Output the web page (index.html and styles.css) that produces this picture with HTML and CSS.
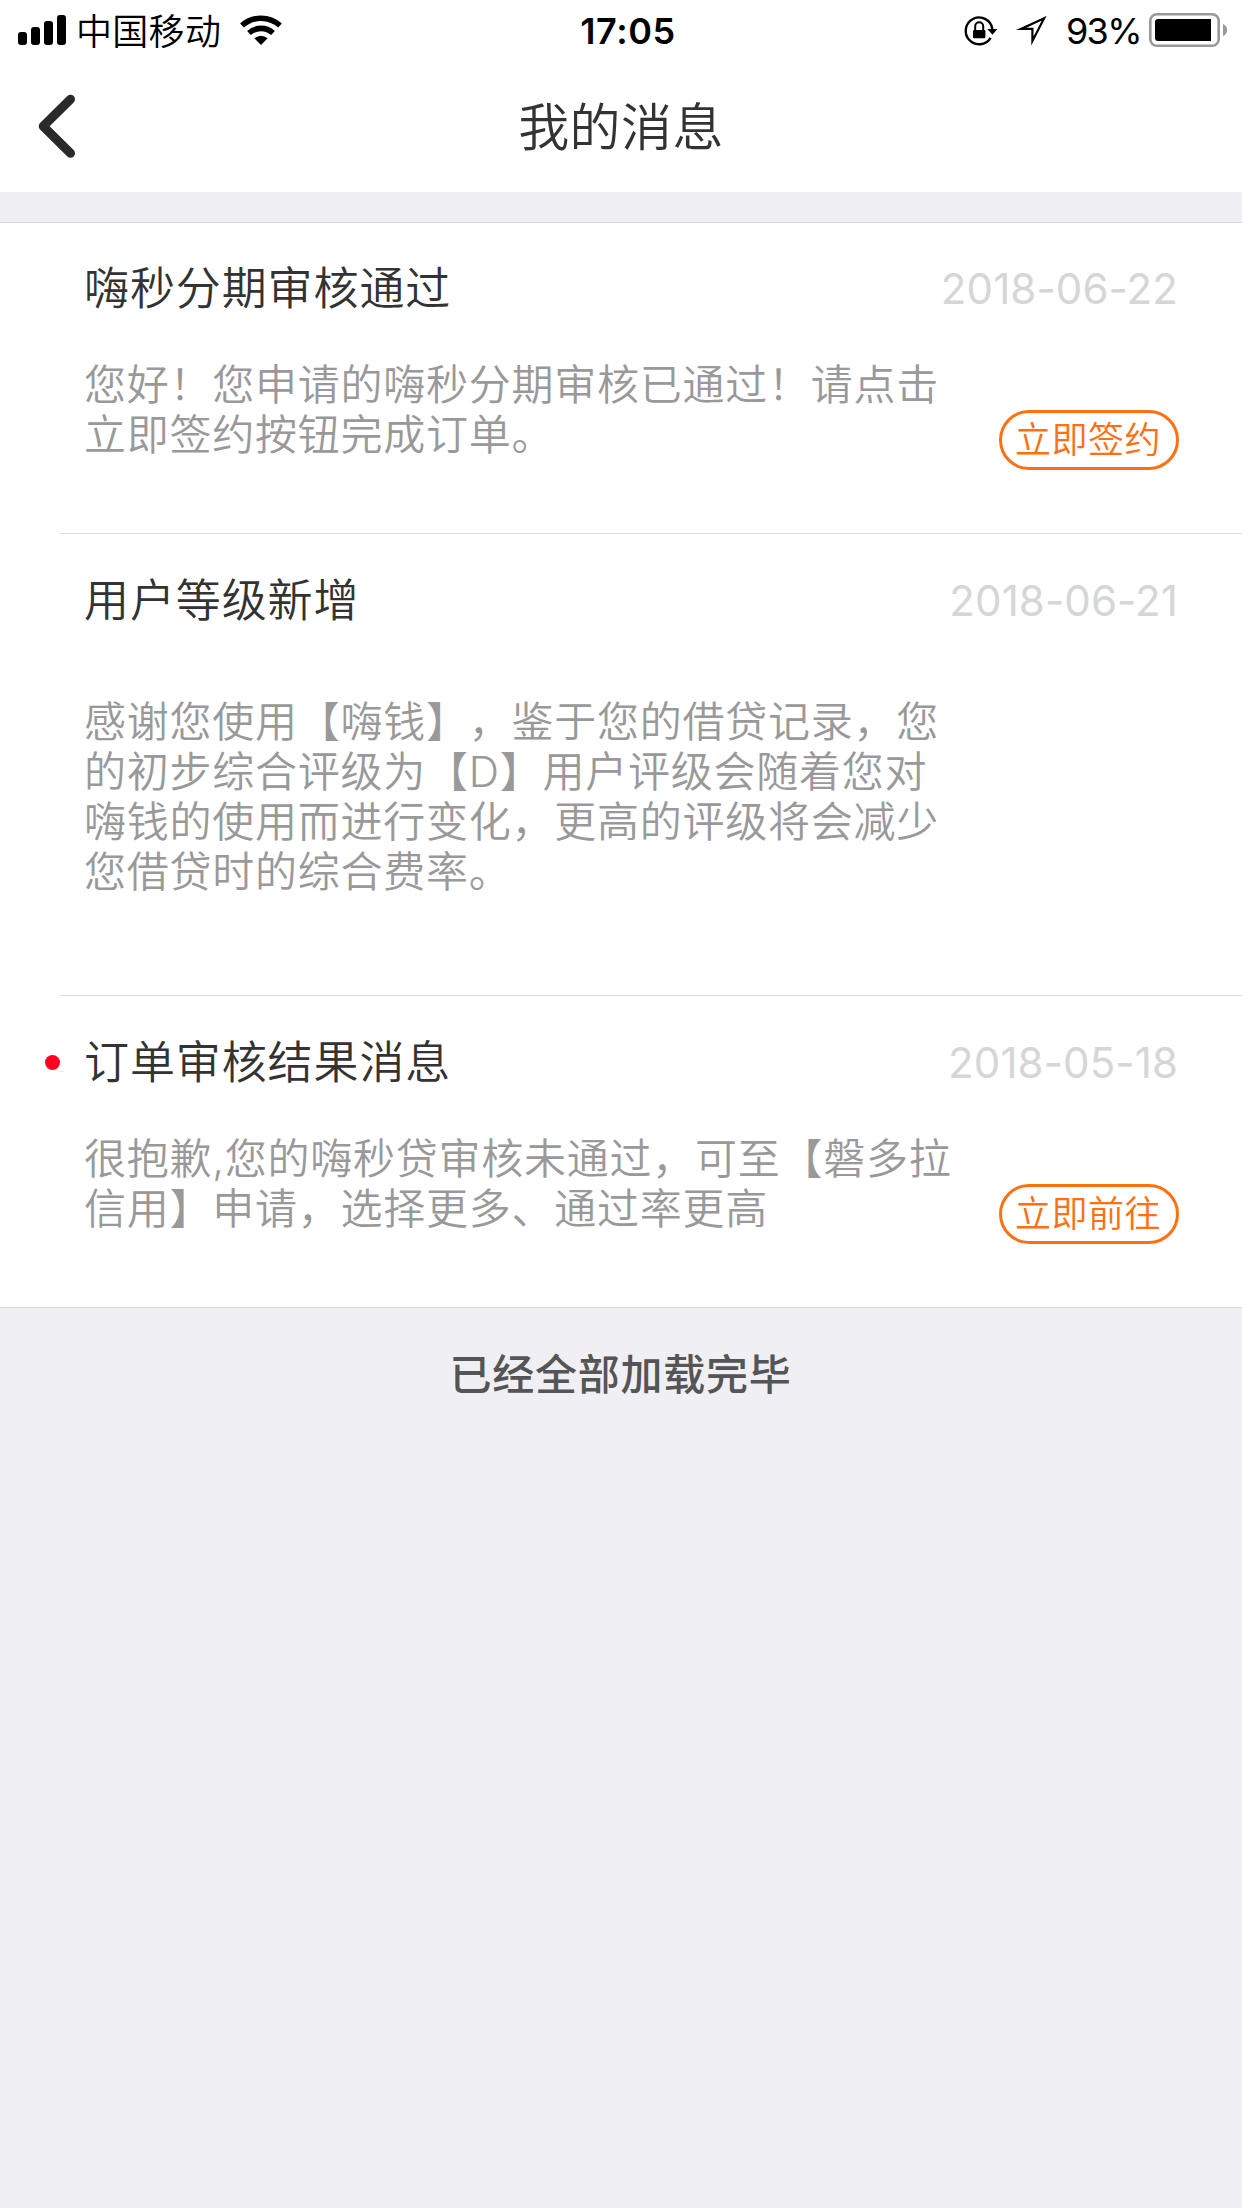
FILE: index.html
```
<!DOCTYPE html>
<html lang="zh-CN">
<head>
    <meta charset="UTF-8">
    <meta name="viewport" content="width=device-width, initial-scale=1.0">
    <title>我的消息</title>
    <link rel="stylesheet" href="styles.css">
</head>
<body>
    <header class="header">
        <div class="status-bar">
            <div class="status-left">
                <svg class="signal" width="48" height="60" viewBox="0 0 48 60">
                    <rect x="0" y="32" width="9" height="13" rx="3"/>
                    <rect x="13" y="27" width="9" height="18" rx="3"/>
                    <rect x="26" y="21" width="9" height="24" rx="3"/>
                    <rect x="39" y="15" width="9" height="30" rx="3"/>
                </svg>
                <span class="carrier">中国移动</span>
                <svg class="wifi" width="42" height="60" viewBox="0 0 42 60">
                    <path d="M2 25.5 A28.5 28.5 0 0 1 40 25.5" fill="none" stroke="#000" stroke-width="5.6"/>
                    <path d="M9 33 A18 18 0 0 1 33 33" fill="none" stroke="#000" stroke-width="5.6"/>
                    <path d="M14.3 38.3 Q21 33 27.7 38.3 L21 45 Z"/>
                </svg>
            </div>
            <span class="time">17:05</span>
            <div class="status-right">
                <svg class="lock" width="36" height="60" viewBox="0 0 36 60">
                    <path d="M27.6 37.8 A13.4 13.4 0 1 1 29.4 29" fill="none" stroke="#000" stroke-width="2.4"/>
                    <path d="M24.4 29 H34.4 L29.4 34.8 Z"/>
                    <rect x="10" y="30" width="12.4" height="8.2" rx="1.2"/>
                    <path d="M12.2 31 V26.2 A4 4 0 0 1 20.2 26.2 V31" fill="none" stroke="#000" stroke-width="2"/>
                </svg>
                <svg class="location" width="32" height="60" viewBox="0 0 32 60">
                    <path d="M28.2 18.2 L5 28.9 H16.4 V41 Z" fill="none" stroke="#000" stroke-width="2.2" stroke-miterlimit="8"/>
                </svg>
                <span class="percent">93%</span>
                <svg class="battery" width="79" height="60" viewBox="0 0 79 60">
                    <rect x="1.3" y="14.3" width="68.4" height="31.4" rx="6.5" fill="none" stroke="#999" stroke-width="2.6"/>
                    <path d="M9 19 H62 V41 H9 Q6 41 6 38 V22 Q6 19 9 19 Z"/>
                    <path d="M74 24 Q78 25.5 78 30 Q78 34.5 74 36 Z" fill="#999"/>
                </svg>
            </div>
        </div>
        <div class="nav">
            <svg class="back" width="40" height="66" viewBox="0 0 40 66">
                <path d="M34.5 6.2 L7.2 33.3 L34.5 60.3" fill="none" stroke="#2a2a2a" stroke-width="9" stroke-linecap="round" stroke-linejoin="round"/>
            </svg>
            <h1 class="nav-title">我的消息</h1>
        </div>
    </header>

    <main class="message-list">
        <div class="message">
            <div class="message-head">
                <h2 class="message-title">嗨秒分期审核通过</h2>
                <span class="message-date">2018-06-22</span>
            </div>
            <div class="message-body">
                <p class="message-text">您好！您申请的嗨秒分期审核已通过！请点击立即签约按钮完成订单。</p>
                <button class="message-btn" type="button">立即签约</button>
            </div>
        </div>

        <div class="message message-long">
            <div class="message-head">
                <h2 class="message-title">用户等级新增</h2>
                <span class="message-date">2018-06-21</span>
            </div>
            <div class="message-body">
                <p class="message-text">感谢您使用【嗨钱】，鉴于您的借贷记录，您的初步综合评级为【D】用户评级会随着您对嗨钱的使用而进行变化，更高的评级将会减少您借贷时的综合费率。</p>
            </div>
        </div>

        <div class="message unread">
            <div class="message-head">
                <h2 class="message-title">订单审核结果消息</h2>
                <span class="message-date">2018-05-18</span>
            </div>
            <div class="message-body">
                <p class="message-text">很抱歉,您的嗨秒贷审核未通过，可至【磐多拉信用】申请，选择更多、通过率更高</p>
                <button class="message-btn" type="button">立即前往</button>
            </div>
        </div>
    </main>

    <p class="list-end">已经全部加载完毕</p>
</body>
</html>
```

FILE: styles.css
```
* {
    box-sizing: border-box;
}

body {
    margin: 0;
    min-height: 2208px;
    background-color: #efeff4;
    font-family: Inter, "Noto Sans CJK SC", sans-serif;
    font-weight: 350;
    text-spacing-trim: space-all;
}

h1,
h2,
p {
    margin: 0;
    font-weight: 350;
}

svg {
    display: block;
    flex: none;
}

.header {
    height: 192px;
    background-color: #fff;
}

/* status bar */
.status-bar {
    display: grid;
    grid-template-columns: 1fr auto 1fr;
    height: 60px;
    padding: 0 14px 0 18px;
    font-size: 36px;
    line-height: 62px;
    color: #000;
}

.status-left,
.status-right {
    display: flex;
}

.status-right {
    justify-content: flex-end;
}

.carrier {
    margin-left: 10px;
    line-height: 64px;
    letter-spacing: 0.3px;
}

.wifi {
    margin-left: 19px;
}

.time {
    font-weight: 600;
    letter-spacing: 0.6px;
    padding-left: 10px;
}

.location {
    margin-left: 17px;
}

.percent {
    margin-left: 18px;
    font-weight: 400;
    letter-spacing: -1.6px;
}

.battery {
    margin-left: 8px;
}

/* title bar */
.nav {
    display: grid;
    grid-template-columns: 180px 1fr 180px;
    align-items: center;
    height: 132px;
}

.back {
    margin-left: 36px;
}

.nav-title {
    padding-top: 3px;
    font-size: 51px;
    line-height: 60px;
    letter-spacing: 0.4px;
    text-align: center;
    color: #333;
}

/* messages */
.message-list {
    margin-top: 30px;
    border-top: 1px solid #d9d9dc;
    border-bottom: 1px solid #d9d9dc;
    background-color: #fff;
}

.message {
    position: relative;
    height: 311px;
    margin-left: 60px;
    padding: 36px 64px 0 24px;
    border-bottom: 1px solid #dcdcde;
}

.message + .message {
    padding-top: 37px;
}

.message:last-child {
    border-bottom: none;
}

.message-long {
    height: 462px;
}

.message-head {
    display: flex;
    justify-content: space-between;
    line-height: 60px;
}

.message-title {
    font-size: 45px;
    letter-spacing: 0.9px;
    color: #333;
}

.message-date {
    font-size: 42px;
    font-weight: 400;
    letter-spacing: 0.1px;
    color: #d6d6d6;
}

.message-body {
    display: flex;
    justify-content: space-between;
    margin-top: 41px;
}

.message-long .message-body {
    margin-top: 66px;
}

.message-text {
    width: 872px;
    font-size: 42px;
    line-height: 50px;
    letter-spacing: 0.75px;
    color: #999;
}

.message-btn {
    width: 180px;
    height: 60px;
    margin: 50px -1px 0 0;
    padding: 0 2px 0 0;
    border: 3px solid #ff7010;
    border-radius: 30px;
    background: none;
    font-family: inherit;
    font-size: 36px;
    font-weight: 350;
    line-height: 54px;
    letter-spacing: 0.5px;
    color: #ff7010;
}

/* red dot left of the title */
.unread::before {
    content: "";
    position: absolute;
    left: -15px;
    top: 59px;
    width: 15px;
    height: 15px;
    border-radius: 50%;
    background-color: #ff0020;
}

.list-end {
    margin-top: 37px;
    padding-right: 1px;
    font-size: 42px;
    line-height: 60px;
    font-weight: 500;
    letter-spacing: 0.75px;
    text-align: center;
    color: #555;
}
```
